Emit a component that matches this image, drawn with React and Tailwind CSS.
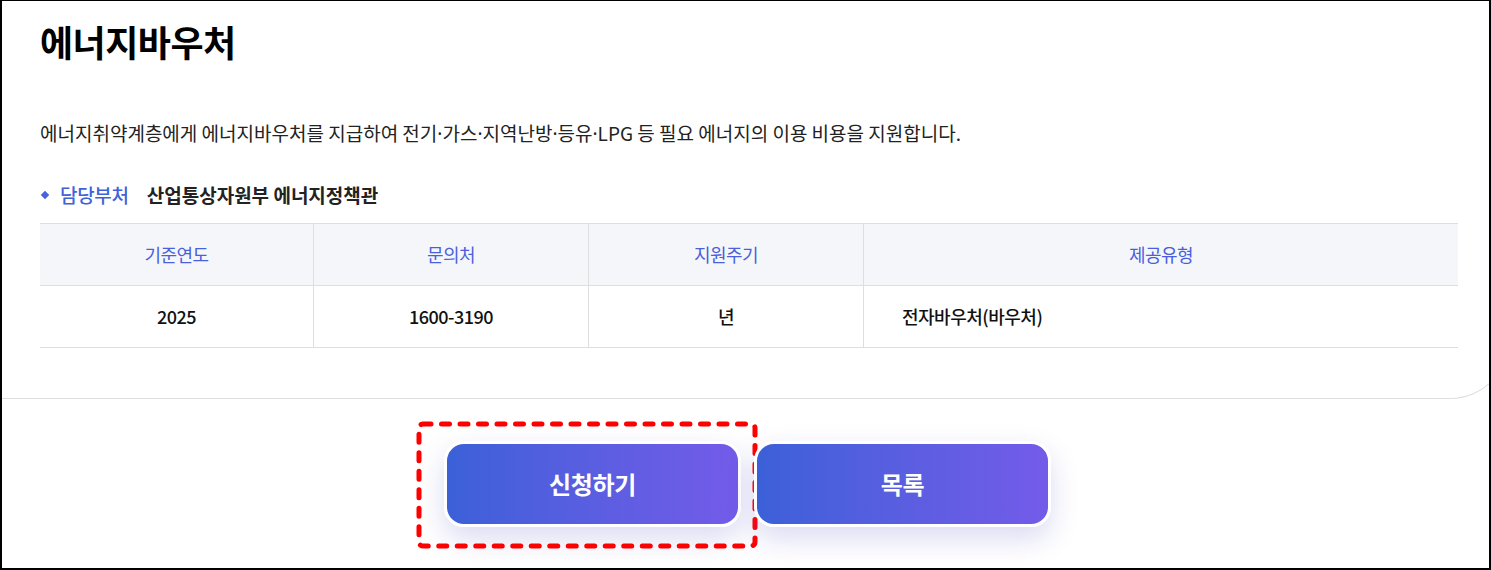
import React from 'react';

const FONT = { fontFamily: '"Noto Sans CJK KR", "Noto Sans", sans-serif' };

const COLS = [
  { key: 'year', header: '기준연도', value: '2025', w: 'w-[274px]' },
  { key: 'tel', header: '문의처', value: '1600-3190', w: 'w-[275px]' },
  { key: 'cycle', header: '지원주기', value: '년', w: 'w-[275px]' },
  { key: 'type', header: '제공유형', value: '전자바우처(바우처)', w: 'flex-1', left: true },
];

// narrow middle dot, the CJK one is full width
const Dot = () => <span className="font-['Noto_Sans',sans-serif]">·</span>;

function FocusRing() {
  return (
    <svg className="absolute -left-[28px] -top-[20px] pointer-events-none" width="342" height="128">
      <rect x="3" y="3" width="336" height="122" rx="4" fill="none" stroke="#ff0000"
        strokeWidth="5" strokeDasharray="8 10.5" strokeLinecap="round" />
    </svg>
  );
}

function GradButton({ children, focused }) {
  return (
    <div className="relative">
      {focused && <FocusRing />}
      <button className="w-[297px] h-[86px] rounded-[20px] border-[3px] border-white bg-gradient-to-r from-[#3b60d8] to-[#735be9] text-white text-[24px] font-bold tracking-[-0.3px] shadow-[0_12px_28px_rgba(90,90,200,0.22)]">
        {children}
      </button>
    </div>
  );
}

export default function App() {
  return (
    <div style={FONT} className="w-[1491px] h-[570px] overflow-hidden bg-white border-l-2 border-r-2 border-t border-b-2 border-black box-border">
      <div className="w-[1510px] h-[398px] -ml-[2px] border-b border-r border-[#dedede] rounded-br-[60px] bg-white px-[40px]">
        <h1 className="pt-[16px] text-[36px] leading-[48px] font-bold text-black tracking-[-0.5px]">에너지바우처</h1>

        <p className="mt-[54px] text-[19px] leading-[28px] text-[#222]">
          에너지취약계층에게 에너지바우처를 지급하여 전기<Dot />가스<Dot />지역난방<Dot />등유<Dot />LPG 등 필요 에너지의 이용 비용을 지원합니다.
        </p>

        <div className="mt-[33px] flex items-center text-[19px] leading-[28px]">
          <span className="w-[6px] h-[6px] bg-[#4a63dc] rotate-45 ml-[2px] mr-[12px]" />
          <span className="text-[#4161d9] font-medium tracking-[-0.3px]">담당부처</span>
          <span className="ml-[18px] text-[#222] font-bold">산업통상자원부 에너지정책관</span>
        </div>

        <div className="mt-[14px] w-[1418px] border-t border-[#dedede]">
          <div className="flex bg-[#f5f6fa] border-b border-[#dedede] h-[62px]">
            {COLS.map((c, i) => (
              <div key={c.key} className={`${c.w} flex items-center justify-center text-[18px] text-[#4a5fdc] tracking-[-0.5px] ${i < COLS.length - 1 ? 'border-r border-[#dedede]' : ''}`}>
                {c.header}
              </div>
            ))}
          </div>
          <div className="flex border-b border-[#dedede] h-[62px]">
            {COLS.map((c, i) => (
              <div key={c.key} className={`${c.w} flex items-center ${c.left ? 'justify-start pl-[38px]' : 'justify-center'} text-[18px] font-medium text-[#111] tracking-[-0.5px] ${i < COLS.length - 1 ? 'border-r border-[#dedede]' : ''}`}>
                {c.value}
              </div>
            ))}
          </div>
        </div>
      </div>

      <div className="flex justify-center gap-[13px] pt-[42px] pl-[4px]">
        <GradButton focused>신청하기</GradButton>
        <GradButton>목록</GradButton>
      </div>
    </div>
  );
}
